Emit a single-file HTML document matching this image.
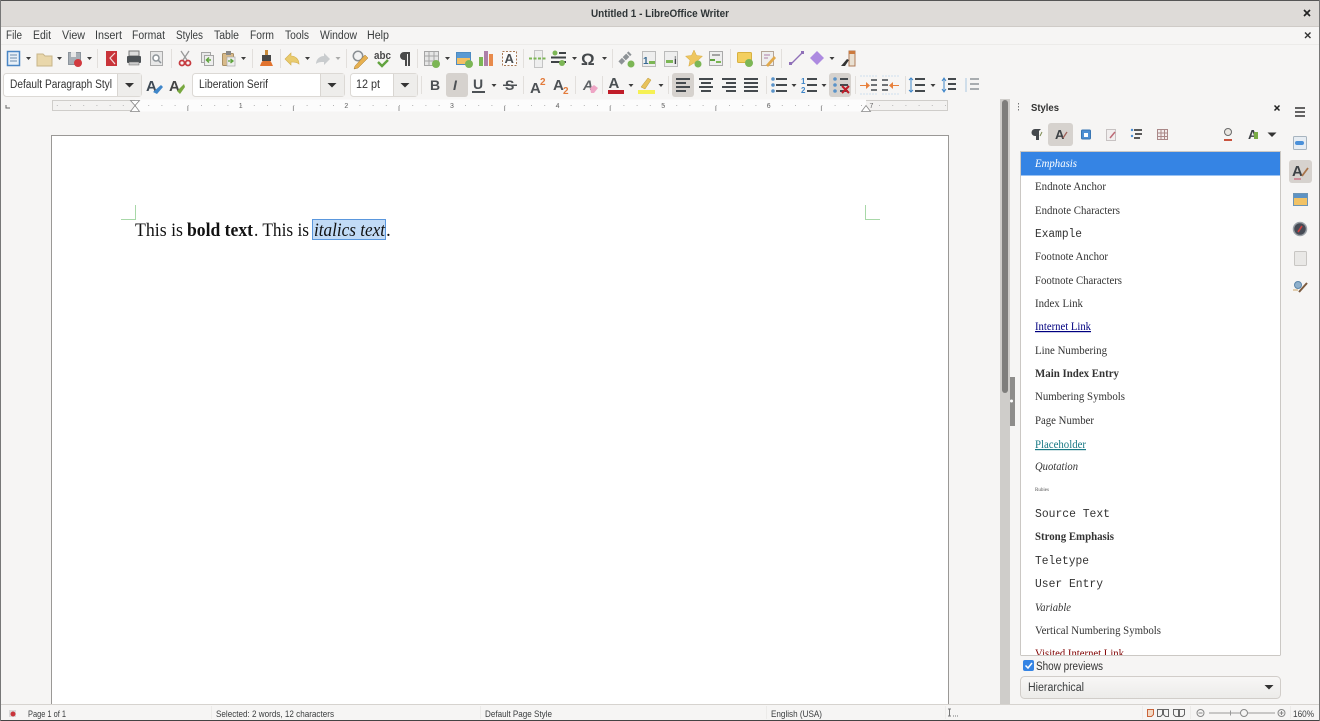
<!DOCTYPE html>
<html><head><meta charset="utf-8"><title>Untitled 1 - LibreOffice Writer</title>
<style>
html,body{margin:0;padding:0;background:#f6f5f4;overflow:hidden}
svg{display:block;position:absolute;left:0;top:0}
text{font-family:"Liberation Sans",sans-serif;fill:#2e3436;font-size:11px}
.m text{font-size:11.5px;fill:#3a3d3e}
.s text{font-family:"Liberation Serif",serif;font-size:12px;fill:#333}
.s .mono{font-family:"Liberation Mono",monospace;font-size:11.500px}
.st text{font-size:9.500px;fill:#3a3d3e}
.sep{stroke:#e2dfdc;stroke-width:1}
.d{font-family:"Liberation Serif",serif;font-size:19.200px;fill:#111}
</style></head><body>
<svg width="1320" height="721" viewBox="0 0 1320 721" xmlns="http://www.w3.org/2000/svg">
<defs>
<path id="a" d="M-2.500-1.500h5L0 1.500z" fill="#3d3d3d"/>
<path id="A" d="M-4.500-2h9L0 2.500z" fill="#333"/>
<linearGradient id="btn" x1="0" y1="0" x2="0" y2="1"><stop offset="0" stop-color="#f8f7f6"/><stop offset="1" stop-color="#ecebe9"/></linearGradient>
</defs>
<rect width="1320" height="721" fill="#f6f5f4"/>
<!-- title -->
<rect width="1320" height="26" fill="#dedbd8"/>
<rect width="1320" height="1" fill="#555"/>
<rect y="26" width="1320" height="1" fill="#cfcbc7"/>
<text x="591" y="17" font-weight="bold" textLength="138" lengthAdjust="spacingAndGlyphs" style="font-size:11px">Untitled 1 - LibreOffice Writer</text>
<path d="M1304 10l6 6m0-6l-6 6" stroke="#222" stroke-width="1.700"/>
<path d="M1305 32.500l5.500 5.500m0-5.500l-5.500 5.500" stroke="#333" stroke-width="1.400"/>
<!-- menu -->
<g class="m">
<text x="6" y="39" textLength="16" lengthAdjust="spacingAndGlyphs">File</text>
<text x="33" y="39" textLength="18" lengthAdjust="spacingAndGlyphs">Edit</text>
<text x="62" y="39" textLength="23" lengthAdjust="spacingAndGlyphs">View</text>
<text x="95" y="39" textLength="27" lengthAdjust="spacingAndGlyphs">Insert</text>
<text x="132" y="39" textLength="33" lengthAdjust="spacingAndGlyphs">Format</text>
<text x="176" y="39" textLength="27" lengthAdjust="spacingAndGlyphs">Styles</text>
<text x="214" y="39" textLength="25" lengthAdjust="spacingAndGlyphs">Table</text>
<text x="250" y="39" textLength="24" lengthAdjust="spacingAndGlyphs">Form</text>
<text x="285" y="39" textLength="24" lengthAdjust="spacingAndGlyphs">Tools</text>
<text x="320" y="39" textLength="37" lengthAdjust="spacingAndGlyphs">Window</text>
<text x="367" y="39" textLength="22" lengthAdjust="spacingAndGlyphs">Help</text>
</g>
<rect y="44" width="1320" height="1" fill="#ecebe9"/>
<!-- separators -->
<g class="sep">
<path d="M97.500 49v19M171.500 49v19M252.500 49v19M280.500 49v19M346.500 49v19M417.500 49v19M523.500 49v19M612.500 49v19M730.500 49v19M781.500 49v19"/>
<path d="M421.500 76v18M523.500 76v18M575.500 76v18M602.500 76v18M668.500 76v18M766.500 76v18M855.500 76v18M905.500 76v18"/>
</g>
<!-- row 1 icons -->
<rect x="7.500" y="51.500" width="12" height="14" fill="#e8f0f8" stroke="#4a86c5" stroke-width="1.500"/>
<path d="M10 55h7M10 58h7M10 61h7" stroke="#6d8bab"/>
<use href="#a" x="28.500" y="58.500"/>
<path d="M37 54h6l2 2h7v10H37z" fill="#e9d7ab" stroke="#c8b58a"/>
<use href="#a" x="59.500" y="58.500"/>
<rect x="68.500" y="52.500" width="12" height="12" fill="#a7aeb5" stroke="#8c949c"/>
<rect x="71" y="52" width="5" height="5" fill="#e8e8e8"/>
<circle cx="78" cy="63" r="4" fill="#d13a3f"/>
<use href="#a" x="89.500" y="58.500"/>
<rect x="106" y="51" width="11" height="15" fill="#c9343a"/>
<path d="M115 53l-5 5 5 6" stroke="#f3dcdc" stroke-width="1.200" fill="none"/>
<rect x="129" y="51" width="10" height="5" fill="#ddd" stroke="#777"/>
<rect x="127" y="56" width="14" height="7" rx="1" fill="#4d5256"/>
<rect x="129" y="62" width="10" height="3" fill="#ccc" stroke="#666" stroke-width=".5"/>
<rect x="150.500" y="51.500" width="12" height="14" fill="#e8e8e8" stroke="#aaa"/>
<circle cx="156" cy="58" r="3" fill="#fff" stroke="#8d9499" stroke-width="1.500"/>
<path d="M158 60l3 3" stroke="#8d9499" stroke-width="1.500"/>
<path d="M181 51l6 9M189 51l-6 9" stroke="#999" stroke-width="1.300"/>
<circle cx="182" cy="63" r="2.500" fill="none" stroke="#c63b40" stroke-width="1.800"/>
<circle cx="188" cy="63" r="2.500" fill="none" stroke="#c63b40" stroke-width="1.800"/>
<rect x="201.500" y="52.500" width="9" height="10" fill="#e9e9e9" stroke="#a5a5a5"/>
<rect x="204.500" y="55.500" width="9" height="10" fill="#eee" stroke="#a5a5a5"/>
<path d="M206 60h5m-2-2.500l-2.500 2.500 2.500 2.500" stroke="#5ea33d" stroke-width="1.500" fill="none"/>
<rect x="222.500" y="53.500" width="11" height="12" rx="1" fill="#d9bb8a" stroke="#a98f65"/>
<rect x="226" y="51" width="5" height="4" fill="#888"/>
<rect x="227" y="57" width="8" height="9" fill="#eee" stroke="#aaa" stroke-width=".7"/>
<path d="M228 61h4m-1.500-2l2.500 2-2.500 2" stroke="#5ea33d" stroke-width="1.300" fill="none"/>
<use href="#a" x="243.500" y="58.500"/>
<rect x="265" y="50" width="3" height="5" fill="#c98a3a"/>
<rect x="262" y="55" width="9" height="6" fill="#474747"/>
<path d="M260 66c1-3 2-5 3-5h7c1 0 2 3 3 5z" fill="#e2732e"/>
<path d="M299 64c0-5-4-8-8-8v-3l-6 6 6 6v-3c3 0 6 0 8 2z" fill="#e9cb6e" stroke="#d2ae4d" stroke-width=".6"/>
<use href="#a" x="307.500" y="58.500"/>
<path d="M316 64c0-5 4-8 8-8v-3l6 6-6 6v-3c-3 0-6 0-8 2z" fill="#c9ccce"/>
<use href="#a" x="338" y="58.500" opacity=".4"/>
<circle cx="358" cy="56" r="4.700" fill="#f2f2f2" stroke="#8a8f93" stroke-width="1.500"/>
<path d="M355 66l10-11 3 3-10 10-4 1z" fill="#e7b04f" stroke="#a57c34" stroke-width=".5"/>
<text x="374" y="59" font-weight="bold" textLength="17" lengthAdjust="spacingAndGlyphs" style="font-size:11px;fill:#4a4a4a">abc</text>
<path d="M378 62l4 4 6-6" stroke="#62a33f" stroke-width="2.400" fill="none"/>
<path d="M410 52h-6a3.500 3.500 0 0 0 0 8h1v6h2V54h1v12h2z" fill="#4a4a4a"/>
<rect x="424.500" y="51.500" width="14" height="14" fill="#e6e6e6" stroke="#a5a5a5"/>
<path d="M424 56h14M424 61h14M429 51v14M434 51v14" stroke="#a5a5a5"/>
<circle cx="436" cy="64" r="4" fill="#7cb655"/>
<use href="#a" x="447.500" y="58.500"/>
<rect x="456.500" y="52.500" width="14" height="12" fill="#f3c064" stroke="#4d8bc2"/>
<rect x="457" y="53" width="13" height="5" fill="#5a9ad3"/>
<circle cx="469" cy="64" r="4" fill="#7cb655"/>
<rect x="479" y="57" width="4" height="9" fill="#7cb655"/>
<rect x="484" y="51" width="4" height="15" fill="#ad7fa8"/>
<rect x="489" y="54" width="4" height="12" fill="#e88a4b"/>
<rect x="502.500" y="51.500" width="14" height="14" fill="#fbfbfb" stroke="#a77955" stroke-dasharray="2 1.500"/>
<text x="504.500" y="63" font-weight="bold" style="font-size:13px;fill:#4a4f53">A</text>
<rect x="534.500" y="50.500" width="8" height="17" fill="#eee" stroke="#c4c4c4"/>
<path d="M529 58.500h17" stroke="#7cb655" stroke-width="2" stroke-dasharray="3 1.500"/>
<circle cx="555" cy="53" r="2.500" fill="#7cb655"/>
<path d="M559 53h7M551 57.500h15M551 62h15" stroke="#3f4346" stroke-width="2"/>
<circle cx="562" cy="63" r="3" fill="#7cb655"/>
<use href="#a" x="574.500" y="58.500"/>
<text x="581" y="65" font-weight="bold" style="font-size:17px;fill:#44484b">Ω</text>
<use href="#a" x="604.500" y="58.500"/>
<path d="M620 63l10-10" stroke="#8d9296" stroke-width="4.500" stroke-dasharray="5 1"/>
<circle cx="631" cy="64" r="3.500" fill="#7cb655"/>
<rect x="642.500" y="51.500" width="13" height="15" fill="#eee" stroke="#bbb"/>
<text x="643" y="64" font-weight="bold" style="font-size:10px;fill:#396a93">1</text>
<rect x="649" y="61" width="6" height="3" fill="#7cb655"/>
<rect x="664.500" y="51.500" width="13" height="15" fill="#eee" stroke="#bbb"/>
<rect x="666" y="60" width="7" height="3" fill="#7cb655"/>
<text x="674" y="64" font-weight="bold" style="font-size:10px;fill:#44484b">i</text>
<path d="M694 50l2.500 5.500 6 .7-4.500 4 1.200 6L694 63l-5.200 3.200 1.200-6-4.500-4 6-.7z" fill="#eec65f" stroke="#d5a941" stroke-width=".5"/>
<circle cx="698" cy="64" r="3.500" fill="#7cb655"/>
<rect x="709.500" y="51.500" width="13" height="14" fill="#eee" stroke="#aaa"/>
<path d="M712 55h8" stroke="#555"/>
<path d="M710 60h5" stroke="#5ea33d" stroke-width="2"/>
<rect x="716" y="61" width="5" height="2" fill="#7cb655"/>
<rect x="737.500" y="52.500" width="14" height="10" rx="1" fill="#f3cf5f" stroke="#d8b141"/>
<circle cx="749" cy="63" r="4" fill="#7cb655"/>
<rect x="761.500" y="51.500" width="12" height="14" fill="#eee" stroke="#b5a597"/>
<path d="M764 55h6M764 58h4" stroke="#ad7fa8"/>
<path d="M766 65l8-9 2 2-8 9z" fill="#e1a94b"/>
<path d="M791 64l11-11" stroke="#8f70b8" stroke-width="1.300"/>
<rect x="789" y="62" width="3" height="3" fill="#8f70b8"/>
<rect x="801" y="51" width="3" height="3" fill="#8f70b8"/>
<path d="M817 51l7 7-7 7-7-7z" fill="#ad8ae0"/>
<use href="#a" x="832" y="58.500"/>
<rect x="849" y="51" width="6" height="15" fill="#e9e0d2" stroke="#b07b58"/>
<rect x="849" y="51" width="6" height="3" fill="#cc7a3e"/>
<path d="M841 66l6-7 2 1-4 6z" fill="#333"/>
<!-- row 2 combos -->
<rect x="3.500" y="73.500" width="138" height="23" rx="3" fill="#fff" stroke="#dcd9d5"/>
<path d="M117.500 74h23.500v22h-23.500z" fill="#eeedeb"/><path d="M117.500 74v22" stroke="#d9d6d2"/>
<text x="10" y="88" textLength="102" lengthAdjust="spacingAndGlyphs" style="font-size:11.500px;fill:#333">Default Paragraph Styl</text>
<use href="#A" x="129.500" y="85"/>
<rect x="192.500" y="73.500" width="152" height="23" rx="3" fill="#fff" stroke="#dcd9d5"/>
<path d="M320.500 74h23.500v22h-23.500z" fill="#eeedeb"/><path d="M320.500 74v22" stroke="#d9d6d2"/>
<text x="199" y="88" textLength="69" lengthAdjust="spacingAndGlyphs" style="font-size:11.500px;fill:#333">Liberation Serif</text>
<use href="#A" x="332" y="85"/>
<rect x="350.500" y="73.500" width="67" height="23" rx="3" fill="#fff" stroke="#dcd9d5"/>
<path d="M393.500 74h23.500v22h-23.500z" fill="#eeedeb"/><path d="M393.500 74v22" stroke="#d9d6d2"/>
<text x="356" y="88" textLength="24" lengthAdjust="spacingAndGlyphs" style="font-size:11.500px;fill:#333">12 pt</text>
<use href="#A" x="405" y="85"/>
<text x="146" y="91" font-weight="bold" style="font-size:15px;fill:#3f4a55">A</text>
<path d="M153 92l8-7 2 2-6 7z" fill="#3f86c9"/>
<text x="169" y="91" font-weight="bold" style="font-size:15px;fill:#444">A</text>
<path d="M177 91l7-7 1 3-5 7z" fill="#78a83f"/>
<!-- row 2 highlights -->
<rect x="446" y="73" width="22" height="24" rx="3" fill="#d6d2ce"/>
<rect x="672" y="73" width="22" height="24" rx="3" fill="#d6d2ce"/>
<rect x="829" y="73" width="22" height="24" rx="3" fill="#d6d2ce"/>
<text x="430" y="90" font-weight="bold" style="font-size:14px;fill:#4d5155">B</text>
<text x="453" y="90" font-weight="bold" font-style="italic" style="font-size:14px;fill:#4d5155">I</text>
<text x="473" y="89" font-weight="bold" style="font-size:14px;fill:#4d5155">U</text>
<rect x="472" y="91" width="13" height="2" fill="#4d5155"/>
<use href="#a" x="494" y="85.500"/>
<text x="505" y="90" font-weight="bold" style="font-size:14px;fill:#4d5155">S</text>
<rect x="503" y="84.500" width="14" height="1.500" fill="#4d5155"/>
<text x="530" y="93" font-weight="bold" style="font-size:15px;fill:#4d5155">A</text>
<text x="540" y="85" font-weight="bold" style="font-size:10px;fill:#e37b3b">2</text>
<text x="553" y="90" font-weight="bold" style="font-size:15px;fill:#4d5155">A</text>
<text x="563" y="94" font-weight="bold" style="font-size:10px;fill:#e37b3b">2</text>
<text x="583" y="90" font-weight="bold" font-style="italic" style="font-size:14px;fill:#5d6165">A</text>
<path d="M590 88l4-3 4 3-4 5h-3z" fill="#eea5c5"/>
<text x="608.500" y="88" font-weight="bold" style="font-size:15px;fill:#4a4f52">A</text>
<rect x="608" y="90" width="16" height="4" fill="#c01c28"/>
<use href="#a" x="631" y="85.500"/>
<path d="M641 87l7-9 3 2-6 9z" fill="#e8c25a" stroke="#b99636" stroke-width=".5"/>
<rect x="638" y="90" width="17" height="4" fill="#f6f154"/>
<use href="#a" x="661" y="85.500"/>
<g stroke="#454a4e" stroke-width="2">
<path d="M676 79h14M676 83h10M676 87h14M676 91h10"/>
<path d="M699 79h14M701 83h10M699 87h14M701 91h10"/>
<path d="M722 79h14M726 83h10M722 87h14M726 91h10"/>
<path d="M744 79h14M744 83h14M744 87h14M744 91h14"/>
<path d="M776 79h11M776 85h11M776 91h11"/>
<path d="M807 79h10M807 85h10M807 91h10"/>
<path d="M840 79h8M840 85h8M840 91h8"/>
</g>
<g fill="#5a93c9"><circle cx="773" cy="79" r="1.800"/><circle cx="773" cy="85" r="1.800"/><circle cx="773" cy="91" r="1.800"/><circle cx="835" cy="79" r="1.800"/><circle cx="835" cy="85" r="1.800"/><circle cx="835" cy="91" r="1.800"/></g>
<use href="#a" x="794" y="85.500"/>
<text x="801" y="84" font-weight="bold" style="font-size:8px;fill:#3f86c9">1</text>
<text x="801" y="93" font-weight="bold" style="font-size:8px;fill:#3f86c9">2</text>
<use href="#a" x="824" y="85.500"/>
<path d="M842 86l7 7m0-7l-7 7" stroke="#c01c28" stroke-width="2"/>
<path d="M860 85h6v-3l4 3.500-4 3.500v-3h-6z" fill="#e8803c"/>
<path d="M871 80h6M871 85h6M871 90h6" stroke="#5b6064" stroke-width="1.800"/>
<path d="M860 76h17M860 94h17" stroke="#cfe0ee" stroke-dasharray="2 1"/>
<path d="M899 85h-6v-3l-4 3.500 4 3.500v-3h6z" fill="#e8803c"/>
<path d="M882 80h6M882 85h6M882 90h6" stroke="#5b6064" stroke-width="1.800"/>
<path d="M882 76h17M882 94h17" stroke="#cfe0ee" stroke-dasharray="2 1"/>
<path d="M915 79h10M915 85h10M915 91h10" stroke="#454a4e" stroke-width="2"/>
<path d="M911 78v14m-2-12l2-2 2 2m-4 10l2 2 2-2" stroke="#3f86c9" fill="none"/>
<use href="#a" x="933" y="85.500"/>
<path d="M948 79h8M948 84h8M948 89h8" stroke="#454a4e" stroke-width="2"/>
<path d="M944 78v14m-2-11l2-3 2 3m-4 8l2 3 2-3" stroke="#3f86c9" fill="none"/>
<path d="M970 79h9M970 84h9M970 89h9" stroke="#a9adb0" stroke-width="2"/>
<path d="M966 78v14" stroke="#a9c7e0" fill="none"/>
<!-- ruler -->
<rect x="52.500" y="100.500" width="895" height="10" fill="#f3f2f1" stroke="#cfcdca"/>
<rect x="135" y="99.500" width="731" height="12" fill="#fcfcfc"/>
<path d="M6 105v3h4" stroke="#666" fill="none"/>
<path d="M135 105.500H866" stroke="#b5b5b5" stroke-dasharray="1 12.200"/>
<path d="M56.800 105.500H135" stroke="#bbb" stroke-dasharray="1 12.200"/>
<path d="M879 105.500H948" stroke="#bbb" stroke-dasharray="1 12.200"/>
<path d="M187.800 106v5M293.400 106v5M399 106v5M504.600 106v5M610.200 106v5M715.800 106v5M821.400 106v5" stroke="#999"/>
<g><text x="238.800" y="108" style="font-size:7px;fill:#666">1</text><text x="344.400" y="108" style="font-size:7px;fill:#666">2</text><text x="450" y="108" style="font-size:7px;fill:#666">3</text><text x="555.600" y="108" style="font-size:7px;fill:#666">4</text><text x="661.200" y="108" style="font-size:7px;fill:#666">5</text><text x="766.800" y="108" style="font-size:7px;fill:#666">6</text><text x="869.500" y="108" style="font-size:7px;fill:#666">7</text></g>
<path d="M130.500 100.500h9L135 105.500zM130.500 111.500h9L135 105.500z" fill="#fff" stroke="#888" stroke-width=".8"/>
<path d="M861.500 111.500h9L866 105.500z" fill="#fff" stroke="#888" stroke-width=".8"/>
<!-- page -->
<rect x="51.500" y="135.500" width="897" height="580" fill="#fff" stroke="#9a9896"/>
<path d="M121 219.500h14.500V205M880 219.500h-14.500V205" stroke="#a8d8a8" fill="none"/>
<rect x="312.500" y="219.500" width="73" height="20" fill="#c2dbf6" stroke="#5a97dd"/>
<text class="d" x="135" y="236" textLength="48" lengthAdjust="spacingAndGlyphs">This is</text>
<text class="d" x="187" y="236" font-weight="bold" textLength="66" lengthAdjust="spacingAndGlyphs">bold text</text>
<text class="d" x="254" y="236" textLength="55" lengthAdjust="spacingAndGlyphs">. This is</text>
<text class="d" x="314" y="236" font-style="italic" textLength="71" lengthAdjust="spacingAndGlyphs">italics text</text>
<text class="d" x="386" y="236">.</text>
<!-- scrollbar -->
<rect x="1000" y="99" width="10" height="606" fill="#cfcdca"/>
<rect x="1002" y="100" width="6" height="293" rx="3" fill="#7f7e7c"/>
<!-- sidebar -->
<rect x="1010" y="99" width="310" height="606" fill="#f6f5f4"/>
<rect x="1010" y="377" width="5" height="49" fill="#8e8d8b"/>
<circle cx="1011.500" cy="401" r="1.500" fill="#fff"/>
<path d="M1018.500 103v1.500M1018.500 106v1.500M1018.500 109v1.500" stroke="#777"/>
<text x="1031" y="111" font-weight="bold" textLength="28" lengthAdjust="spacingAndGlyphs" style="font-size:10.500px;fill:#333">Styles</text>
<path d="M1274.500 105.500l5 5m0-5l-5 5" stroke="#222" stroke-width="1.500"/>
<path d="M1295 108h10M1295 112h10M1295 116h10" stroke="#333" stroke-width="1.500"/>
<!-- style family bar -->
<rect x="1048" y="123" width="25" height="23" rx="3" fill="#d6d2ce"/>
<path d="M1041 129h-6a3.500 3.500 0 0 0 0 7h1v4h3v-9z" fill="#44484c"/>
<path d="M1040 136l2-4" stroke="#7a8a50"/>
<text x="1055" y="139" font-weight="bold" style="font-size:13px;fill:#3d4246">A</text>
<path d="M1063 138l4-6" stroke="#a0625a" stroke-width="1.300"/>
<rect x="1081.500" y="130" width="9" height="9" rx="1" fill="#4d8fd3" stroke="#3a76b3"/>
<rect x="1084" y="133" width="4" height="4" fill="#fff"/>
<rect x="1106.500" y="129.500" width="9" height="11" fill="#f1eeee" stroke="#c7c2c2"/>
<path d="M1110 138l5-6" stroke="#bd6a76" stroke-width="1.500"/>
<path d="M1134 130h8M1135 134h7M1134 138h6" stroke="#444" stroke-width="1.800"/>
<circle cx="1132" cy="130" r="1.200" fill="#4d8fd3"/><circle cx="1132" cy="136" r="1.200" fill="#4d8fd3"/>
<rect x="1157.500" y="129.500" width="10" height="10" fill="#f3eded" stroke="#a88"/>
<path d="M1157 133h10M1157 136.500h10M1161 129v11M1164.500 129v11" stroke="#a88"/>
<circle cx="1228" cy="132" r="3.500" fill="#e9e6e1" stroke="#6a6a6a"/>
<path d="M1224 140h8" stroke="#c9533e" stroke-width="2"/>
<text x="1248" y="139" font-weight="bold" style="font-size:13px;fill:#3d4246">A</text>
<rect x="1254" y="132" width="4" height="7" fill="#79ab45"/>
<use href="#A" x="1272" y="134.500"/>
<!-- deck -->
<rect x="1289" y="160" width="23" height="23" rx="3" fill="#d6d2ce"/>
<rect x="1293.500" y="136.500" width="13" height="13" rx="1" fill="#e7edf3" stroke="#a7b4bf"/>
<rect x="1295" y="141" width="9" height="4" rx="2" fill="#4a90d9"/>
<text x="1292" y="176" font-weight="bold" style="font-size:15px;fill:#3d4246">A</text>
<path d="M1302 176l6-8" stroke="#a9744a" stroke-width="1.800"/>
<path d="M1294 179h7" stroke="#c78" stroke-width="1.500"/>
<rect x="1293.500" y="193.500" width="14" height="12" fill="#f1c265" stroke="#6d95b5"/>
<rect x="1294" y="194" width="13" height="4" fill="#5d93c4"/>
<circle cx="1300" cy="229" r="6.500" fill="#464b55" stroke="#9aa0a6" stroke-width="1.500"/>
<path d="M1298 232l4-6" stroke="#d04040" stroke-width="1.600"/>
<rect x="1294.500" y="251.500" width="12" height="14" rx="1" fill="#e9e8e6" stroke="#c8c6c3"/>
<circle cx="1298" cy="285" r="3.500" fill="#8fb0cc" stroke="#5c86aa"/>
<path d="M1299 292l8-9" stroke="#7b5a3e" stroke-width="2"/>
<path d="M1293 290h5" stroke="#c9a263"/>
<!-- list -->
<rect x="1020.500" y="151.500" width="260" height="504" fill="#fff" stroke="#cbc8c4"/>
<rect x="1021" y="152" width="259" height="23.500" fill="#3584e4"/>
<g class="s">
<text x="1035" y="167" font-style="italic" textLength="42" lengthAdjust="spacingAndGlyphs" style="fill:#fff">Emphasis</text>
<text x="1035" y="190" textLength="71" lengthAdjust="spacingAndGlyphs">Endnote Anchor</text>
<text x="1035" y="214" textLength="85" lengthAdjust="spacingAndGlyphs">Endnote Characters</text>
<text class="mono" x="1035" y="237" textLength="47" lengthAdjust="spacingAndGlyphs">Example</text>
<text x="1035" y="260" textLength="73" lengthAdjust="spacingAndGlyphs">Footnote Anchor</text>
<text x="1035" y="284" textLength="87" lengthAdjust="spacingAndGlyphs">Footnote Characters</text>
<text x="1035" y="307" textLength="48" lengthAdjust="spacingAndGlyphs">Index Link</text>
<text x="1035" y="330" textLength="56" lengthAdjust="spacingAndGlyphs" text-decoration="underline" style="fill:#000080">Internet Link</text>
<text x="1035" y="354" textLength="72" lengthAdjust="spacingAndGlyphs">Line Numbering</text>
<text x="1035" y="377" font-weight="bold" textLength="84" lengthAdjust="spacingAndGlyphs">Main Index Entry</text>
<text x="1035" y="400" textLength="90" lengthAdjust="spacingAndGlyphs">Numbering Symbols</text>
<text x="1035" y="424" textLength="59" lengthAdjust="spacingAndGlyphs">Page Number</text>
<text x="1035" y="448" textLength="51" lengthAdjust="spacingAndGlyphs" text-decoration="underline" style="fill:#1a7a86">Placeholder</text>
<text x="1035" y="470" font-style="italic" textLength="43" lengthAdjust="spacingAndGlyphs">Quotation</text>
<text x="1035" y="491" textLength="14" lengthAdjust="spacingAndGlyphs" style="font-size:5.500px;fill:#555">Rubies</text>
<text class="mono" x="1035" y="517" textLength="75" lengthAdjust="spacingAndGlyphs">Source Text</text>
<text x="1035" y="540" font-weight="bold" textLength="79" lengthAdjust="spacingAndGlyphs">Strong Emphasis</text>
<text class="mono" x="1035" y="564" textLength="54" lengthAdjust="spacingAndGlyphs">Teletype</text>
<text class="mono" x="1035" y="587" textLength="68" lengthAdjust="spacingAndGlyphs">User Entry</text>
<text x="1035" y="611" font-style="italic" textLength="36" lengthAdjust="spacingAndGlyphs">Variable</text>
<text x="1035" y="634" textLength="126" lengthAdjust="spacingAndGlyphs">Vertical Numbering Symbols</text>
<text x="1035" y="657" textLength="89" lengthAdjust="spacingAndGlyphs" text-decoration="underline" style="fill:#800000">Visited Internet Link</text>
</g>
<rect x="1020" y="655" width="261" height="50" fill="#f6f5f4"/>
<path d="M1020.500 655.500h260" stroke="#cbc8c4"/>
<rect x="1023" y="660" width="11" height="11" rx="2" fill="#3584e4"/>
<path d="M1025.500 665.500l2.500 2.500 4-5" stroke="#fff" stroke-width="1.500" fill="none"/>
<text x="1036" y="670" textLength="67" lengthAdjust="spacingAndGlyphs" style="font-size:11.500px;fill:#333">Show previews</text>
<rect x="1020.500" y="676.500" width="260" height="22" rx="4" fill="url(#btn)" stroke="#d1cdc9"/>
<text x="1028" y="691" textLength="56" lengthAdjust="spacingAndGlyphs" style="font-size:11.500px;fill:#3a3d3e">Hierarchical</text>
<use href="#A" x="1269" y="687"/>
<!-- status -->
<rect y="705" width="1320" height="15" fill="#f6f5f4"/>
<rect y="704" width="1320" height="1" fill="#d6d3cf"/>
<rect y="720" width="1320" height="1" fill="#444"/>
<rect y="0" width="1" height="721" fill="#777"/>
<rect x="1319" y="0" width="1" height="721" fill="#777"/>
<path d="M211.500 706v13M480.500 706v13M766.500 706v13M945.500 706v13M1142.500 706v13M1190.500 706v13M1290.500 706v13" stroke="#ecebe9"/>
<rect x="9" y="710" width="7" height="7" fill="#dadada"/>
<circle cx="13" cy="714" r="2.500" fill="#c9343a"/>
<g class="st">
<text x="28" y="717" textLength="38" lengthAdjust="spacingAndGlyphs">Page 1 of 1</text>
<text x="216" y="717" textLength="118" lengthAdjust="spacingAndGlyphs">Selected: 2 words, 12 characters</text>
<text x="485" y="717" textLength="67" lengthAdjust="spacingAndGlyphs">Default Page Style</text>
<text x="771" y="717" textLength="51" lengthAdjust="spacingAndGlyphs">English (USA)</text>
<text x="1293" y="717" textLength="21" lengthAdjust="spacingAndGlyphs">160%</text>
</g>
<path d="M948 709h3m-1.500 0v7m-1.500 0h3M953 716h1M955 716h1M957 716h1" stroke="#777"/>
<path d="M1147.500 709.500h6v5l-2 2h-4z" fill="#f3d9c4" stroke="#c9643a"/>
<path d="M1157.500 709.500h5v5l-2 2h-3zM1163.500 709.500h5v7h-3l-2-2z" fill="none" stroke="#666"/>
<path d="M1173.500 709.500h5v7h-3l-2-2zM1179.500 709.500h5v5l-2 2h-3z" fill="none" stroke="#666"/>
<circle cx="1200.500" cy="713" r="3.500" fill="none" stroke="#888"/><path d="M1198.500 713h4" stroke="#888"/>
<path d="M1209 713h66M1230.500 710.500v5" stroke="#999"/>
<circle cx="1244" cy="713" r="3.500" fill="#f6f5f4" stroke="#888"/>
<circle cx="1281.500" cy="713" r="3.500" fill="none" stroke="#888"/><path d="M1279.500 713h4m-2-2v4" stroke="#888"/>
</svg>
</body></html>
